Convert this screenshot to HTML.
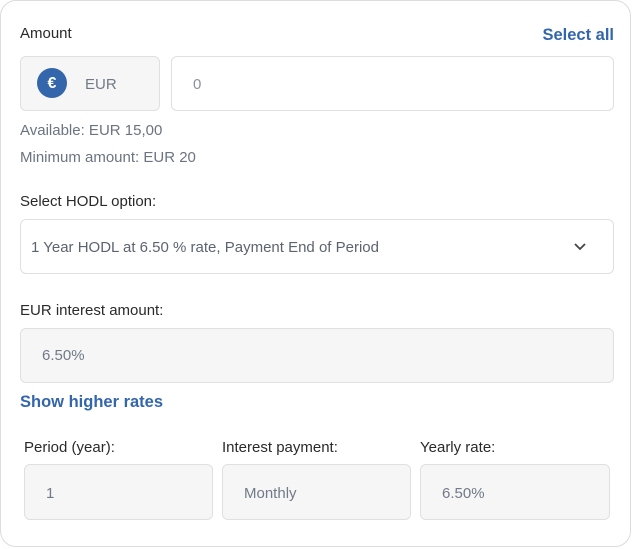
<!DOCTYPE html>
<html><head><style>
body{margin:0;width:632px;height:549px;background:#fff;font-family:"Liberation Sans",sans-serif;position:relative;overflow:hidden}
.card{position:absolute;left:0;top:0;width:629px;height:545px;border:1.5px solid #dcdcdc;border-radius:16px}
.a{position:absolute;white-space:nowrap}
.l{font-size:15px;color:#2a2a2a}
.g{font-size:15px;color:#6b7480}
.b{position:absolute;box-sizing:border-box;border:1px solid #e0e0e0;border-radius:6px}
.f{background:#f6f6f6}
.bl{color:#3466ac;font-weight:bold;font-size:16.5px}
.v{font-size:15px;color:#707a88}
</style></head><body>
<div class="card"></div>
<div class="a l" style="left:20px;top:25px">Amount</div>
<div class="a bl" style="right:18px;top:26px">Select all</div>
<div class="b f" style="left:20px;top:56px;width:140px;height:55px"></div>
<div class="a" style="left:37px;top:68px;width:30px;height:30px;border-radius:50%;background:#3466ac;color:#fff;font-size:16px;font-weight:bold;text-align:center;line-height:31px">€</div>
<div class="a v" style="left:85px;top:76px">EUR</div>
<div class="b" style="left:171px;top:56px;width:443px;height:55px;background:#fff"></div>
<div class="a v" style="left:193px;top:76px;color:#8a929d">0</div>
<div class="a g" style="left:20px;top:122px">Available: EUR 15,00</div>
<div class="a g" style="left:20px;top:149px">Minimum amount: EUR 20</div>
<div class="a l" style="left:20px;top:193px">Select HODL option:</div>
<div class="b" style="left:20px;top:219px;width:594px;height:55px"></div>
<div class="a v" style="left:31px;top:239px;color:#5c6470">1 Year HODL at 6.50 % rate, Payment End of Period</div>
<svg class="a" style="left:573px;top:242px" width="14" height="10" viewBox="0 0 14 10"><path d="M2 2l5 5 5-5" fill="none" stroke="#444" stroke-width="1.8"/></svg>
<div class="a l" style="left:20px;top:302px">EUR interest amount:</div>
<div class="b f" style="left:20px;top:328px;width:594px;height:55px"></div>
<div class="a v" style="left:42px;top:347px">6.50%</div>
<div class="a bl" style="left:20px;top:393px">Show higher rates</div>
<div class="a l" style="left:24px;top:439px">Period (year):</div>
<div class="a l" style="left:222px;top:439px">Interest payment:</div>
<div class="a l" style="left:420px;top:439px">Yearly rate:</div>
<div class="b f" style="left:24px;top:464px;width:189px;height:56px"></div>
<div class="b f" style="left:222px;top:464px;width:189px;height:56px"></div>
<div class="b f" style="left:420px;top:464px;width:190px;height:56px"></div>
<div class="a v" style="left:46px;top:485px">1</div>
<div class="a v" style="left:244px;top:485px">Monthly</div>
<div class="a v" style="left:442px;top:485px">6.50%</div>
</body></html>
